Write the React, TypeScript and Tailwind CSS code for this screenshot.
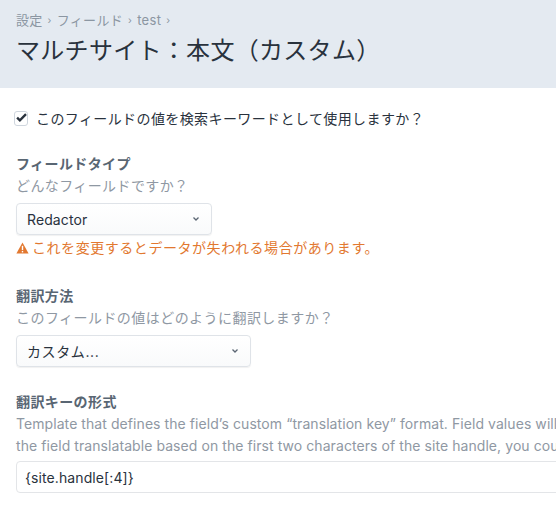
import React from "react";

const font = { fontFamily: '"Inter", "Noto Sans CJK JP", sans-serif' };

function Chevron() {
  return (
    <svg width="8" height="6" viewBox="0 0 8 6" className="shrink-0">
      <path d="M1.5 1.5 L4 4 L6.5 1.5" fill="none" stroke="#5b6673" strokeWidth="1.3" />
    </svg>
  );
}

function Select({ label, width, jp }: { label: string; width: string; jp?: boolean }) {
  return (
    <div
      className={`${width} h-[32px] flex items-center justify-between pl-[10px] pr-[11px] rounded-[4px] border border-[#dfe3e8] bg-gradient-to-b from-[#ffffff] to-[#f9fafb] shadow-[0_1px_1px_rgba(0,0,0,0.06)] text-[14px] text-[#29323d]`}
    >
      <span className={jp ? "tracking-[0.6px]" : "tracking-[0.1px]"}>{label}</span>
      <Chevron />
    </div>
  );
}

export default function App() {
  return (
    <div className="w-[556px] h-[512px] overflow-hidden bg-white" style={font}>
      <div className="bg-[#e4eaf1] h-[88px] pl-[16px] pt-[10px]">
        <div className="flex items-center gap-[5px] text-[13px] leading-[20px] text-[#8b96a2] tracking-[0.3px]">
          <span>設定</span>
          <span className="text-[10px]">›</span>
          <span>フィールド</span>
          <span className="text-[10px]">›</span>
          <span>test</span>
          <span className="text-[10px]">›</span>
        </div>
        <h1 className="mt-[5px] text-[24px] leading-[32px] text-[#29323d] whitespace-nowrap tracking-[0.3px]">
          マルチサイト：本文（カスタム）
        </h1>
      </div>

      <div className="w-[900px] pl-[16px] pt-[21px]">
        <div className="flex items-center gap-[8px] h-[18px]">
          <div className="w-[14px] h-[15px] rounded-[3px] border border-[#cfd6de] bg-white flex items-center justify-center -ml-[2px]">
            <svg width="13" height="11" viewBox="0 0 13 11" className="-mt-[1px] ml-[1px]">
              <path d="M1.3 5.6 L4.6 8.8 L11.8 1.6" fill="none" stroke="#29323d" strokeWidth="2.8" />
            </svg>
          </div>
          <span className="text-[14px] text-[#29323d] whitespace-nowrap tracking-[0.4px]">
            このフィールドの値を検索キーワードとして使用しますか？
          </span>
        </div>

        <div className="mt-[26px]">
          <div className="text-[14px] font-bold leading-[22px] text-[#596673] tracking-[0.4px]">フィールドタイプ</div>
          <div className="text-[14px] leading-[22px] text-[#8f98a3] tracking-[0.4px]">どんなフィールドですか？</div>
          <div className="mt-[6px]">
            <Select label="Redactor" width="w-[196px]" />
          </div>
          <div className="mt-[2px] flex items-center gap-[3px] text-[14px] leading-[22px] text-[#e27830]">
            <svg width="13" height="12" viewBox="0 0 13 12" className="shrink-0">
              <path d="M6.5 0.5 L12.6 11.5 L0.4 11.5 Z" fill="#e27830" strokeLinejoin="round" />
              <rect x="5.8" y="3.8" width="1.4" height="4.3" fill="#fff" />
              <rect x="5.8" y="9" width="1.4" height="1.4" fill="#fff" />
            </svg>
            <span className="whitespace-nowrap tracking-[0.55px]">これを変更するとデータが失われる場合があります。</span>
          </div>
        </div>

        <div className="mt-[26px]">
          <div className="text-[14px] font-bold leading-[22px] text-[#596673] tracking-[0.4px]">翻訳方法</div>
          <div className="text-[14px] leading-[22px] text-[#8f98a3] tracking-[0.45px]">このフィールドの値はどのように翻訳しますか？</div>
          <div className="mt-[6px]">
            <Select label="カスタム..." width="w-[235px]" jp />
          </div>
        </div>

        <div className="mt-[24px]">
          <div className="text-[14px] font-bold leading-[22px] text-[#596673] tracking-[0.4px]">翻訳キーの形式</div>
          <div className="text-[14px] leading-[22px] text-[#8f98a3] whitespace-nowrap tracking-[0.07px]">
            <div>Template that defines the field’s custom “translation key” format. Field values will be copied to all sites that produce the same key. For example, to make</div>
            <div>the field translatable based on the first two characters of the site handle, you could enter {"{site.handle[:2]}"}.</div>
          </div>
          <div className="mt-[4px] h-[32px] w-[700px] flex items-center px-[8px] rounded-[4px] border border-[#e3e5e8] bg-white text-[14px] text-[#29323d] tracking-[0.1px]">
            {"{site.handle[:4]}"}
          </div>
        </div>
      </div>
    </div>
  );
}
